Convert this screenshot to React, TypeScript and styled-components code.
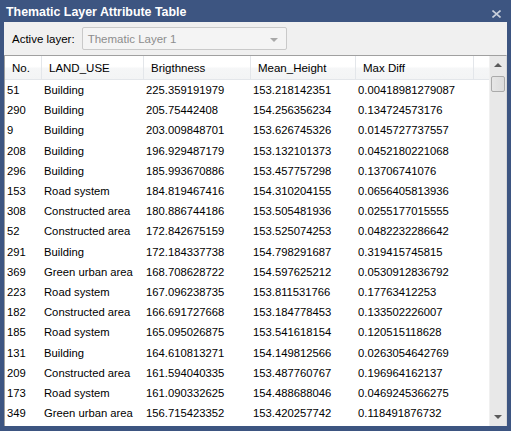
import React from "react";
import styled, { createGlobalStyle } from "styled-components";

const GlobalStyle = createGlobalStyle`
  html, body {
    margin: 0;
    padding: 0;
    background: #ffffff;
  }
  * {
    box-sizing: border-box;
  }
`;

type Row = [string, string, string, string, string];

const rows: Row[] = [
  ["51", "Building", "225.359191979", "153.218142351", "0.00418981279087"],
  ["290", "Building", "205.75442408", "154.256356234", "0.134724573176"],
  ["9", "Building", "203.009848701", "153.626745326", "0.0145727737557"],
  ["208", "Building", "196.929487179", "153.132101373", "0.0452180221068"],
  ["296", "Building", "185.993670886", "153.457757298", "0.13706741076"],
  ["153", "Road system", "184.819467416", "154.310204155", "0.0656405813936"],
  ["308", "Constructed area", "180.886744186", "153.505481936", "0.0255177015555"],
  ["52", "Constructed area", "172.842675159", "153.525074253", "0.0482232286642"],
  ["291", "Building", "172.184337738", "154.798291687", "0.319415745815"],
  ["369", "Green urban area", "168.708628722", "154.597625212", "0.0530912836792"],
  ["223", "Road system", "167.096238735", "153.811531766", "0.17763412253"],
  ["182", "Constructed area", "166.691727668", "153.184778453", "0.133502226007"],
  ["185", "Road system", "165.095026875", "153.541618154", "0.120515118628"],
  ["131", "Building", "164.610813271", "154.149812566", "0.0263054642769"],
  ["209", "Constructed area", "161.594040335", "153.487760767", "0.196964162137"],
  ["173", "Road system", "161.090332625", "154.488688046", "0.0469245366275"],
  ["349", "Green urban area", "156.715423352", "153.420257742", "0.118491876732"],
];

const columns = [
  { title: "No.", width: 37 },
  { title: "LAND_USE", width: 102 },
  { title: "Brigthness", width: 107 },
  { title: "Mean_Height", width: 105 },
  { title: "Max Diff", width: 118 },
];

const App = () => {
  return (
    <>
      <GlobalStyle />
      <Window>
        <TitleBar>
          <Title>Thematic Layer Attribute Table</Title>
          <Close viewBox="0 0 9 8" width="9" height="8">
            <path d="M0.5 0.5 L8.5 7.5 M8.5 0.5 L0.5 7.5" />
          </Close>
        </TitleBar>
        <Client>
          <Toolbar>
            <Label>Active layer:</Label>
            <Combo>
              <span>Thematic Layer 1</span>
              <ComboArrow />
            </Combo>
          </Toolbar>
          <Grid>
            <TableArea>
              <HeaderRow>
                {columns.map((c) => (
                  <HeaderCell key={c.title} $w={c.width}>
                    {c.title}
                  </HeaderCell>
                ))}
                <HeaderFiller />
              </HeaderRow>
              {rows.map((r) => (
                <DataRow key={r[0]}>
                  {r.map((v, i) => (
                    <Cell key={i} $w={columns[i].width}>
                      {v}
                    </Cell>
                  ))}
                </DataRow>
              ))}
            </TableArea>
            <ScrollBar>
              <ScrollButton>
                <ArrowUp />
              </ScrollButton>
              <Thumb />
              <Track />
              <ScrollButton>
                <ArrowDown />
              </ScrollButton>
            </ScrollBar>
          </Grid>
        </Client>
      </Window>
    </>
  );
};

export default App;

const Window = styled.div`
  width: 511px;
  height: 431px;
  background: #3d5581;
  padding: 0 4px 5px 4px;
  display: flex;
  flex-direction: column;
  font-family: "Liberation Sans", Arial, sans-serif;
  font-size: 11.25px;
  color: #000;
`;

const TitleBar = styled.div`
  height: 22px;
  display: flex;
  align-items: center;
  justify-content: space-between;
  padding: 0 5px 0 2px;
`;

const Title = styled.div`
  color: #ffffff;
  font-weight: bold;
  font-size: 12.4px;
  padding-top: 2px;
`;

const Close = styled.svg`
  stroke: #c9d0dc;
  stroke-width: 1.6;
  fill: none;
  margin-top: 5px;
  margin-right: 1px;
`;

const Client = styled.div`
  flex: 1;
  background: #f0f0f0;
  display: flex;
  flex-direction: column;
  min-height: 0;
`;

const Toolbar = styled.div`
  height: 33px;
  display: flex;
  align-items: center;
  padding: 0 0 0 8px;
  gap: 7px;
`;

const Label = styled.span`
  font-size: 11.5px;
`;

const Combo = styled.div`
  width: 205px;
  height: 23px;
  border: 1px solid #c9c9c9;
  border-radius: 2px;
  background: #f4f4f4;
  color: #8d8d8d;
  font-size: 11.5px;
  display: flex;
  align-items: center;
  justify-content: space-between;
  padding: 0 8px 0 5px;
`;

const ComboArrow = styled.span`
  width: 0;
  height: 0;
  border-left: 4px solid transparent;
  border-right: 4px solid transparent;
  border-top: 4px solid #a8a8a8;
  margin-top: 2px;
`;

const Grid = styled.div`
  flex: 1;
  min-height: 0;
  background: #ffffff;
  border: 1px solid #a0a0a0;
  border-right-color: #d8d8d8;
  border-bottom: none;
  display: flex;
  overflow: hidden;
`;

const TableArea = styled.div`
  flex: 1;
  display: flex;
  flex-direction: column;
  overflow: hidden;
`;

const HeaderRow = styled.div`
  display: flex;
  height: 24px;
  flex-shrink: 0;
  background: linear-gradient(#ffffff 0%, #ffffff 45%, #f5f6f7 55%, #f3f4f5 100%);
  border-bottom: 1px solid #e3e6ea;
`;

const HeaderCell = styled.div<{ $w: number }>`
  width: ${(p) => p.$w}px;
  flex-shrink: 0;
  display: flex;
  align-items: center;
  padding-left: 7px;
  border-right: 1px solid #e3e6ea;
  font-size: 11.5px;
  white-space: nowrap;
`;

const HeaderFiller = styled.div`
  flex: 1;
`;

const DataRow = styled.div`
  display: flex;
  height: 20.2px;
  flex-shrink: 0;
`;

const Cell = styled.div<{ $w: number }>`
  width: ${(p) => p.$w}px;
  flex-shrink: 0;
  display: flex;
  align-items: center;
  padding-left: 2px;
  white-space: nowrap;
  overflow: hidden;
`;

const ScrollBar = styled.div`
  width: 17px;
  flex-shrink: 0;
  background: #e8e8e8;
  border-left: 1px solid #f0f0f0;
  display: flex;
  flex-direction: column;
`;

const ScrollButton = styled.div`
  height: 18px;
  display: flex;
  align-items: center;
  justify-content: center;
  flex-shrink: 0;
`;

const ArrowUp = styled.span`
  width: 0;
  height: 0;
  border-left: 4px solid transparent;
  border-right: 4px solid transparent;
  border-bottom: 4px solid #5a5a5a;
`;

const ArrowDown = styled(ArrowUp)`
  border-bottom: none;
  border-top: 4px solid #5a5a5a;
`;

const Thumb = styled.div`
  height: 16px;
  margin: 2px 1px 0 1px;
  background: linear-gradient(to right, #e6e6e6, #dcdcdc);
  border: 1px solid #aaaaaa;
  border-radius: 2px;
  flex-shrink: 0;
`;

const Track = styled.div`
  flex: 1;
`;
